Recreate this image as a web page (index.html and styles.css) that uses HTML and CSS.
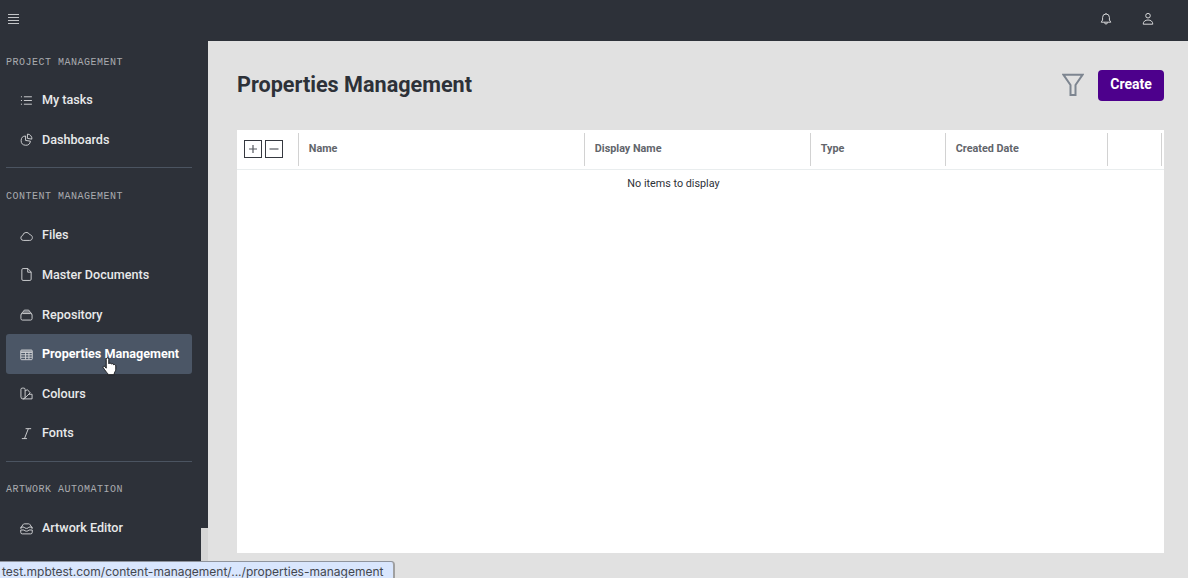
FILE: index.html
```html
<!DOCTYPE html>
<html lang="en">
<head>
  <meta charset="UTF-8" />
  <meta name="viewport" content="width=device-width, initial-scale=1" />
  <title>Properties Management</title>
  <link rel="stylesheet" href="styles.css">
</head>
<body>
  <header class="topbar">
    <svg class="menu-icon" width="11" height="11" viewBox="0 0 11 11"><path d="M0 .5h11M0 3.500h11M0 6.500h11M0 9.500h11" /></svg>
    <div class="topbar-actions">
      <svg width="12" height="14" viewBox="0 0 12 14"><path d="M1.200 10.200h9.600L9.400 8V5.400a3.400 3.400 0 0 0-6.800 0V8zM4.500 10.500a1.500 1.500 0 0 0 3 0M6 1v1" /></svg>
      <svg width="12" height="14" viewBox="0 0 12 14"><circle cx="6" cy="3.700" r="2.300" /><path d="M1.200 12.200c0-2.700 2-4.200 4.800-4.200s4.800 1.500 4.800 4.200z" /></svg>
    </div>
  </header>

  <div class="layout">
    <aside class="sidebar">
      <nav class="group">
        <h2>PROJECT MANAGEMENT</h2>
        <a class="item"><svg viewBox="0 0 14 14"><path d="M4.200 3h8.600M4.200 7h8.600M4.200 11h8.600M1 3h1.200M1 7h1.200M1 11h1.200" /></svg>My tasks</a>
        <a class="item"><svg viewBox="0 0 14 14"><path d="M6 3.200a5 5 0 1 0 5.200 5.600L6 8zM8 1.200v4.600l4.800.8A4.900 4.900 0 0 0 8 1.200z" /></svg>Dashboards</a>
      </nav>
      <nav class="group">
        <h2>CONTENT MANAGEMENT</h2>
        <a class="item"><svg viewBox="0 0 14 14"><path d="M3.500 12.300a2.700 2.700 0 0 1-.6-5.300 4 4 0 0 1 7.600-.9c1.700.3 2.800 1.500 2.800 3.100 0 1.800-1.100 3.100-2.800 3.100z" /></svg>Files</a>
        <a class="item"><svg viewBox="0 0 14 14"><path d="M8.500 .6H3.300C2.500.6 2 1.100 2 1.900v10.200c0 .8.5 1.300 1.300 1.300h7.400c.8 0 1.300-.5 1.300-1.300V4.300zM8.300 .6v3.900H12" /></svg>Master Documents</a>
        <a class="item"><svg viewBox="0 0 14 14"><path d="M1 7.500C1 6.600 1.600 6 2.500 6h9c.9 0 1.500.6 1.500 1.500v3.900c0 .9-.6 1.600-1.500 1.600h-9c-.9 0-1.500-.7-1.500-1.600zM1.400 6.200 3 4.300h8l1.600 1.900M3.400 4l1.200-1.700h4.800L10.600 4" /></svg>Repository</a>
        <a class="item active"><svg viewBox="0 0 14 14"><rect x=".8" y="2.200" width="12.400" height="10.400" rx="1" /><path d="M1 4.800h12M1 7.300h12M1 9.900h12M6 4.800v7.400M9.600 4.800v7.400M1 3.400h12" /></svg>Properties Management</a>
        <a class="item"><svg viewBox="0 0 14 14"><path d="M1 2.500C1 1.700 1.500 1.200 2.300 1.200h1.900c.8 0 1.300.5 1.300 1.300v8.200a2.200 2.200 0 0 1-4.500 0zM5.500 4.200 8 2.900l3 3.400-5.700 5.500M9.600 7.800H13v5H3.300M3.200 10.500v.5" /></svg>Colours</a>
        <a class="item"><svg viewBox="0 0 14 14"><path d="M6 1.800h6M2 12.500h5.500M9 1.800 4.800 12.500" /></svg>Fonts</a>
      </nav>
      <nav class="group">
        <h2>ARTWORK AUTOMATION</h2>
        <a class="item"><svg viewBox="0 0 14 14"><path d="M1 6.300 3.200 2.800Q3.700 2 4.600 2h4.800q.9 0 1.400.8L13 6.300M1 5.500h3.300C4.800 7.300 9.200 7.300 9.700 5.500H13M.8 8.600h3.500c.8 1.700 4.600 1.700 5.400 0h3.500v2.500q0 1.700-1.700 1.700h-9q-1.700 0-1.700-1.700zM1 5.500v2M13 5.500v2" /></svg>Artwork Editor</a>
      </nav>
    </aside>

    <main class="content">
      <div class="page-head">
        <h1>Properties Management</h1>
        <div class="page-actions">
          <svg class="filter-icon" width="22" height="24" viewBox="0 0 22 24"><path d="M1.500 1.800h19L13.500 12v10h-5V12z" /></svg>
          <button class="create">Create</button>
        </div>
      </div>

      <section class="grid">
        <div class="grid-head">
          <div class="cell toggles">
            <button class="toggle"><svg width="10" height="10" viewBox="0 0 10 10"><path d="M1 5h8M5 1v8" /></svg></button>
            <button class="toggle"><svg width="10" height="10" viewBox="0 0 10 10"><path d="M.5 5h9" /></svg></button>
          </div>
          <div class="cell">Name</div>
          <div class="cell">Display Name</div>
          <div class="cell">Type</div>
          <div class="cell">Created Date</div>
          <div class="cell"></div>
        </div>
        <p class="empty">No items to display</p>
      </section>
    </main>
  </div>

  <div class="sidebar-gap"></div>
  <div class="link-status">test.mpbtest.com/content-management/.../properties-management</div>
  <svg class="cursor" width="15" height="19" viewBox="0 0 15 19"><path d="M4.200 11.200V2.300c0-1.800 2.600-1.800 2.600 0v4.500c.4-1 2.300-.9 2.500.3.600-.8 2.100-.5 2.300.6.900-.5 2.200 0 2.200 1.200v3.300c0 1.800-1.300 2.900-1.500 3.900v1.600H5.600v-1.300c-1.300-1.100-2.800-3.600-4.400-5.700-.7-1.200.8-2.100 1.800-1.100z" /></svg>
</body>
</html>
```
FILE: styles.css
```css
* {
  box-sizing: border-box;
}
body {
  margin: 0;
  height: 578px;
  overflow: hidden;
  font-family: Roboto, "Liberation Sans", sans-serif;
  background: #e1e1e1;
  color: #2d3138;
}
svg {
  fill: none;
  stroke: #d5d6d8;
  stroke-width: 1;
  flex-shrink: 0;
}

/* top bar */
.topbar {
  display: flex;
  align-items: center;
  justify-content: space-between;
  height: 41px;
  padding: 0 34px 3px 8px;
  background: #2d3139;
}
.menu-icon {
  stroke: #c3c5c8;
}
.topbar-actions {
  display: flex;
  gap: 30px;
}

/* sidebar */
.layout {
  display: flex;
  height: 537px;
}
.sidebar {
  width: 208px;
  flex-shrink: 0;
  padding: 0 16px 0 6px;
  background: #2d3139;
  overflow: hidden;
}
.group {
  padding-bottom: 7.6px;
}
.group + .group {
  border-top: 1px solid #4b5461;
  padding-top: 7.6px;
}
.group + .group + .group {
  padding-top: 6.8px;
}
.group h2 {
  display: flex;
  align-items: center;
  height: 39.5px;
  margin: 0;
  padding-top: 2.5px;
  font: 400 10px "Liberation Mono", monospace;
  letter-spacing: 0.5px;
  color: #a9abaf;
}
.item {
  display: flex;
  align-items: center;
  gap: 9px;
  height: 39.65px;
  padding: 0 0 1px 14px;
  border-radius: 3px;
  font-size: 12.6px;
  font-weight: 500;
  color: #e8e9ea;
  white-space: nowrap;
}
.item svg {
  width: 13px;
  height: 13px;
  margin-top: 1px;
}
.item.active {
  background: #4b5666;
  font-weight: 700;
  color: #fff;
}

/* content */
.content {
  flex: 1;
  padding: 29px 24px 25px 29px;
  display: flex;
  flex-direction: column;
}
.page-head {
  display: flex;
  justify-content: space-between;
  height: 60px;
}
.page-head h1 {
  margin: 0;
  font-size: 21.6px;
  line-height: 30px;
  font-weight: 700;
}
.page-actions {
  display: flex;
  gap: 14px;
}
.filter-icon {
  margin-top: 3px;
  stroke: #7d8590;
  stroke-width: 2;
}
.create {
  width: 66px;
  height: 31px;
  padding: 0 0 3px;
  border: none;
  border-radius: 4px;
  background: #4d008c;
  color: #fff;
  font: 700 14px Roboto, sans-serif;
}
.grid {
  flex: 1;
  background: #fff;
}
.grid-head {
  display: grid;
  grid-template-columns: 62px 286px 226px 135px 162px 54px;
  height: 40px;
  padding: 3px 0;
  border-bottom: 1px solid #e9edee;
}
.cell {
  display: flex;
  align-items: center;
  padding: 0 0 2px 9.8px;
  border-right: 1px solid #d2d2d2;
  font-size: 10.8px;
  font-weight: 700;
  color: #62656b;
}
.toggles {
  gap: 3px;
  padding: 0 0 1px 7px;
}
.toggle {
  display: flex;
  align-items: center;
  justify-content: center;
  width: 18px;
  height: 18px;
  padding: 0;
  border: 1px solid #35383f;
  background: #fff;
}
.toggle svg {
  stroke: #555960;
  stroke-width: 1.2;
}
.empty {
  margin: 7px 0 0;
  padding-right: 54px;
  font-size: 10.8px;
  line-height: 14px;
  text-align: center;
}

/* overlays */
.sidebar-gap {
  position: absolute;
  left: 201px;
  top: 528px;
  width: 7px;
  height: 34px;
  background: #d6d6d6;
}
.link-status {
  position: absolute;
  left: 0;
  bottom: 0;
  width: 395px;
  height: 17px;
  padding-left: 2px;
  border-top: 1px solid #8f949d;
  border-right: 2px solid #a0a0a0;
  border-top-right-radius: 4px;
  background: #d9e6fd;
  color: #43474e;
  font: 12px/19px Inter, sans-serif;
  white-space: nowrap;
}
.cursor {
  position: absolute;
  left: 102px;
  top: 357px;
  fill: #fff;
  stroke: #15171b;
}
```
